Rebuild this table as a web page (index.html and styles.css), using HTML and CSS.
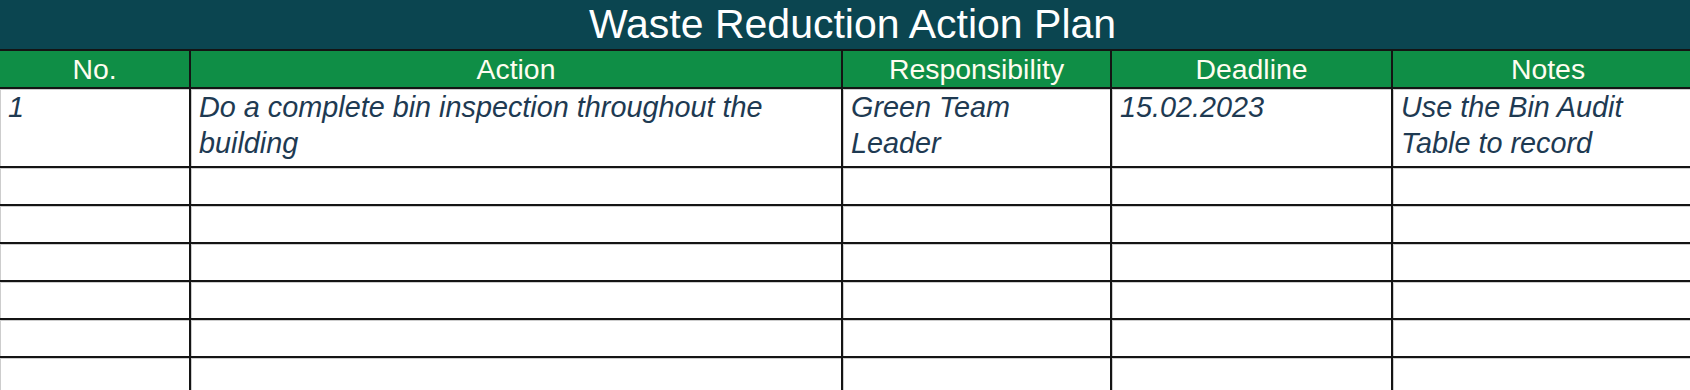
FILE: index.html
```html
<!DOCTYPE html>
<html lang="en">
<head>
<meta charset="utf-8">
<title>Waste Reduction Action Plan</title>
<link rel="stylesheet" href="styles.css">
</head>
<body>
<div class="sheet">
  <div class="title">Waste Reduction Action Plan</div>
  <div class="grid">
    <div class="cell head">No.</div>
    <div class="cell head">Action</div>
    <div class="cell head">Responsibility</div>
    <div class="cell head">Deadline</div>
    <div class="cell head">Notes</div>

    <div class="cell data first">1</div>
    <div class="cell data first">Do a complete bin inspection throughout the building</div>
    <div class="cell data first">Green Team Leader</div>
    <div class="cell data first">15.02.2023</div>
    <div class="cell data first">Use the Bin Audit Table to record</div>

    <div class="cell data"></div><div class="cell data"></div><div class="cell data"></div><div class="cell data"></div><div class="cell data"></div>
    <div class="cell data"></div><div class="cell data"></div><div class="cell data"></div><div class="cell data"></div><div class="cell data"></div>
    <div class="cell data"></div><div class="cell data"></div><div class="cell data"></div><div class="cell data"></div><div class="cell data"></div>
    <div class="cell data"></div><div class="cell data"></div><div class="cell data"></div><div class="cell data"></div><div class="cell data"></div>
    <div class="cell data"></div><div class="cell data"></div><div class="cell data"></div><div class="cell data"></div><div class="cell data"></div>
    <div class="cell data"></div><div class="cell data"></div><div class="cell data"></div><div class="cell data"></div><div class="cell data"></div>
  </div>
</div>
</body>
</html>
```

FILE: styles.css
```css
html, body {
  margin: 0;
  padding: 0;
  background: #ffffff;
  overflow: hidden;
}

.sheet {
  width: 1705px;
  font-family: "Liberation Sans", Arial, sans-serif;
}

.title {
  height: 49px;
  line-height: 49px;
  background: #0b4550;
  color: #ffffff;
  font-size: 41px;
  text-align: center;
  white-space: nowrap;
}

.grid {
  display: grid;
  grid-template-columns: 191px 652px 269px 281px 312px;
  grid-template-rows: 40px 79px;
  grid-auto-rows: 38px;
}

.cell {
  box-sizing: border-box;
  border-right: 2px solid #141414;
  border-bottom: 2px solid #141414;
}

.head {
  border-top: 2px solid #141414;
  background: #0f8e46;
  color: #fffdf0;
  font-size: 28.4px;
  line-height: 36px;
  text-align: center;
  white-space: nowrap;
}

.data {
  background: #ffffff;
  box-shadow: inset 0 1px 0 #cdcdcd, inset 1px 0 0 #cdcdcd;
  color: #1e3a52;
  font-size: 28.8px;
  font-style: italic;
  line-height: 36px;
  padding: 0 12px 0 8px;
}
```
